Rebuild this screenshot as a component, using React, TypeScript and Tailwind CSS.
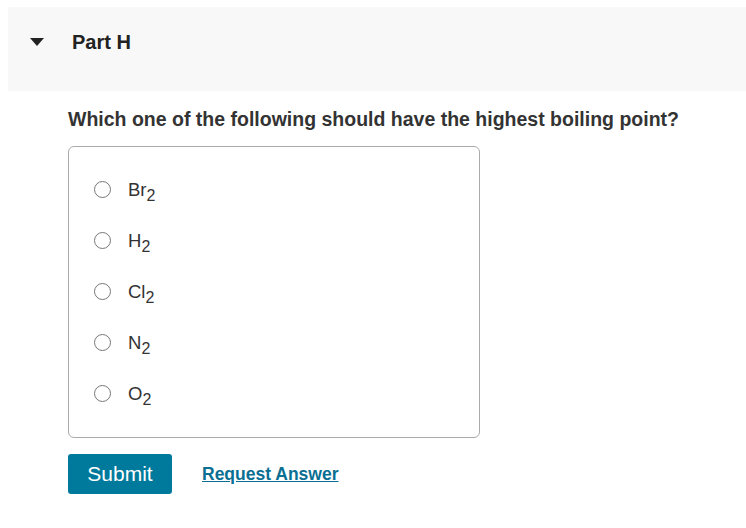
const options = [
  { el: 'Br', sub: '2' },
  { el: 'H', sub: '2' },
  { el: 'Cl', sub: '2' },
  { el: 'N', sub: '2' },
  { el: 'O', sub: '2' },
];

export default function App() {
  return (
    <div className="min-h-screen bg-white pt-[7px] pl-2 font-['Liberation_Sans',Arial,sans-serif]">
      <div className="flex h-[84px] items-start bg-[#f8f8f8] pl-[22px] pt-[23px]">
        <svg width="14" height="8" viewBox="0 0 14 8" className="mt-[8px]">
          <polygon points="0,0 14,0 7,8" fill="#222" />
        </svg>
        <h2 className="ml-[28px] text-[20px] leading-[24px] font-bold text-[#222]">Part H</h2>
      </div>

      <div className="pl-[60px] pt-[16px]">
        <p className="text-[19.5px] leading-[24px] font-bold text-[#333]">
          Which one of the following should have the highest boiling point?
        </p>

        <div className="mt-[15px] flex h-[292px] w-[412px] flex-col rounded-[6px] border border-[#aaa] pl-[25px] pt-[33px]">
          {options.map((o) => (
            <label key={o.el} className="flex h-[51px] items-start gap-[17px]">
              <span className="mt-[1px] h-[17px] w-[17px] rounded-full border-[1.5px] border-[#777] bg-white" />
              <span className="text-[18.5px] leading-[20px] text-[#333]">
                {o.el}
                <sub className="relative top-[5px] text-[16px]">{o.sub}</sub>
              </span>
            </label>
          ))}
        </div>

        <div className="mt-[16px] flex items-center gap-[30px]">
          <button className="h-[40px] w-[104px] rounded-[3px] bg-[#007a9c] text-[21px] text-white">
            Submit
          </button>
          <a className="text-[17.5px] font-bold text-[#0a6f93] underline">Request Answer</a>
        </div>
      </div>
    </div>
  );
}
